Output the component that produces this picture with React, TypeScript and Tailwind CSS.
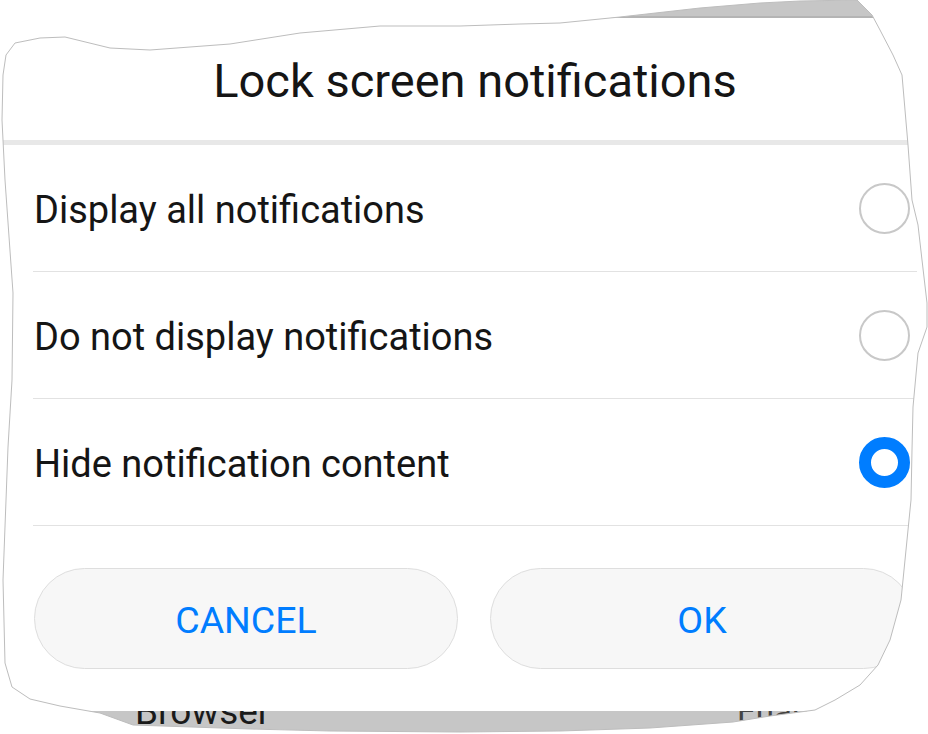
import React from "react";

const TORN =
    "M3 75 L6 55 L15 43 L40 38 L65 37 L110 48 L150 50 L230 44 L300 33 L380 26 L460 26 L520 24 L560 23 L620 17 L700 8 L760 3 L800 1 L857 0 L872 15 L880 30 L893 55 L902 75 L905 110 L908 145 L912 200 L918 225 L922 260 L927 303 L927 327 L918 353 L913 407 L912 450 L911 500 L908 530 L905 560 L901 600 L890 640 L878 665 L860 685 L835 700 L815 710 L770 716 L733 722 L650 728 L560 731 L460 732 L330 731 L250 729 L133 725 L100 713 L60 706 L30 699 L12 687 L5 663 L3 580 L8 447 L12 380 L13 293 L5 180 L2 120 Z";

const options = [
    { label: "Display all notifications", checked: false },
    { label: "Do not display notifications", checked: false },
    { label: "Hide notification content", checked: true },
];

function Radio({ checked }: { checked: boolean }) {
    if (checked) {
        return <div className="w-[51px] h-[51px] rounded-full border-[12px] border-[#007dff] bg-white" />;
    }
    return <div className="w-[51px] h-[51px] rounded-full border-2 border-[#c8c8c8] bg-white" />;
}

export default function App() {
    return (
        <div
            className="relative w-[928px] h-[734px] overflow-hidden bg-white"
            style={{ fontFamily: "Roboto, 'Noto Sans', sans-serif" }}
        >
            {/* screenshot behind the tear */}
            <div className="w-[950px] bg-[#c6c6c6] pt-[16px] flex flex-col">
                <div className="relative z-10 bg-white border-t-2 border-[#b4b4b4] flex flex-col">
                    <div className="h-[122px] flex items-center justify-center pt-[3px]">
                        <h1 className="text-[47px] text-[#151515] leading-none">Lock screen notifications</h1>
                    </div>
                    <div className="h-[5px] bg-[#e8e8e8]" />

                    {options.map((o) => (
                        <div key={o.label} className="ml-[33px] mr-[33px] border-b border-[#e2e2e2]">
                            <div className="h-[126px] flex items-center justify-between pl-[1px] pr-[7px]">
                                <span className="text-[38px] text-[#151515] pt-[5px]">{o.label}</span>
                                <Radio checked={o.checked} />
                            </div>
                        </div>
                    ))}

                    <div className="flex gap-[32px] px-[34px] pt-[42px] pb-[42px]">
                        <button className="w-[424px] h-[101px] rounded-full bg-[#f7f7f7] border border-[#dedede] text-[37.5px] text-[#007dff] pt-[4px]">
                            CANCEL
                        </button>
                        <button className="w-[424px] h-[101px] rounded-full bg-[#f7f7f7] border border-[#dedede] text-[37.5px] text-[#007dff] pt-[4px]">
                            OK
                        </button>
                    </div>
                </div>

                <div className="-mt-[18px] h-[60px] flex items-start">
                    <span className="ml-[135px] w-[602px] text-[37px] leading-none text-[#1a1a1a]">Browser</span>
                    <span className="text-[33px] leading-none pt-[2px] text-[#444]">Enabled</span>
                </div>
            </div>

            {/* torn paper edge */}
            <svg className="absolute inset-0 z-20 pointer-events-none" width="928" height="734" viewBox="0 0 928 734">
                <path d={"M-5 -5 H940 V745 H-5 Z " + TORN} fill="#ffffff" fillRule="evenodd" />
                <path d={TORN} fill="none" stroke="#bdbdbd" strokeWidth="1" strokeLinejoin="round" />
            </svg>
        </div>
    );
}
